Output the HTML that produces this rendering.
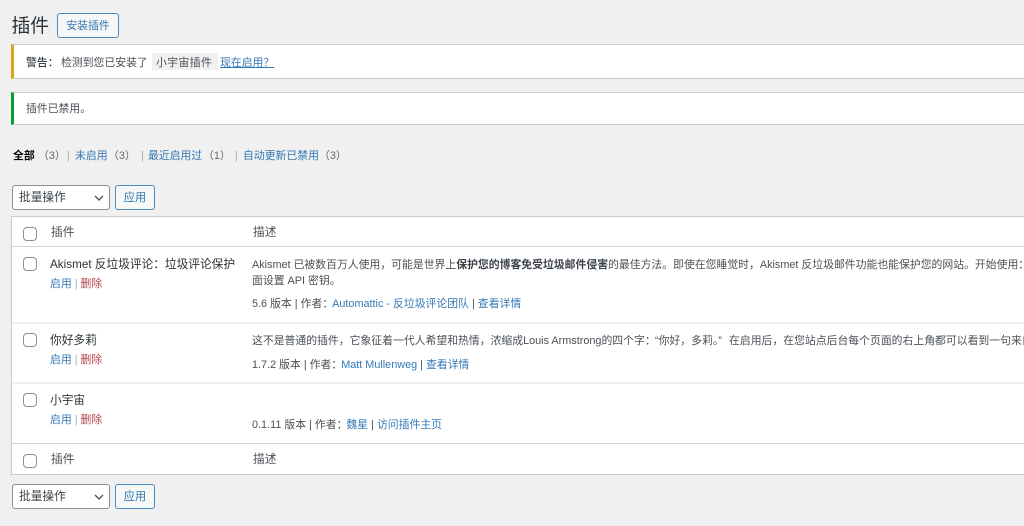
<!DOCTYPE html>
<html lang="zh-CN"><head><meta charset="utf-8"><title>插件</title>
<style>
html,body{margin:0;padding:0;width:1024px;height:526px;overflow:hidden;background:#f0f0f1}
body{position:relative;font-family:"Liberation Sans","Noto Sans CJK SC",sans-serif;font-size:10.85px;color:#4a5056}
#w{position:absolute;left:0;top:0;width:1024px;height:526px;overflow:hidden;filter:blur(.35px)}
.t{position:absolute;white-space:nowrap;line-height:16px;height:16px;margin-top:1px}
.n{font-size:11.7px}
a{color:#3278b4;text-decoration:none}
.del{color:#b8434a}
.box{position:absolute;box-sizing:border-box}
.notice{background:#fff;border:1px solid #c9cacc;border-right:0;border-left-width:3px}
.btn{box-sizing:border-box;position:absolute;border:1px solid #4a8bc0;border-radius:3px;background:#f6f7f7;color:#3278b4;text-align:center}
.sel{box-sizing:border-box;position:absolute;width:98px;height:25px;border:1px solid #8c8f94;border-radius:3px;background:#fff;color:#3c434a;line-height:24px;padding-left:6px;font-size:11.7px}
.cb{position:absolute;box-sizing:border-box;width:14px;height:14px;left:23px;border:1px solid #8c8f94;border-radius:4px;background:#fff}
.sep{position:absolute;left:12px;width:1012px;background:#f0f0f1}
</style></head><body><div id="w">

<div class="t" style="left:11.5px;top:12px;font-size:18.8px;line-height:26px;height:26px;color:#2c3338">插件</div>
<div class="btn" style="left:57px;top:13px;width:62px;height:25px;line-height:24px">安装插件</div>

<div class="box notice" style="left:11px;top:44px;width:1013px;height:35px;border-left-color:#dba617"></div>
<div class="t" style="left:26px;top:54px"><b style="font-weight:500;color:#3c434a">警告：</b></div>
<div class="t" style="left:61px;top:54px">检测到您已安装了</div>
<div class="box" style="left:152px;top:53px;width:66px;height:17px;background:#f0f0f1"></div>
<div class="t" style="left:156px;top:54px;letter-spacing:.4px">小宇宙插件</div>
<div class="t" style="left:220px;top:54px"><a href="#" style="text-decoration:underline">现在启用？</a></div>

<div class="box notice" style="left:11px;top:92px;width:1013px;height:33px;border-left-color:#00a32a"></div>
<div class="t" style="left:26px;top:100px">插件已禁用。</div>

<div class="t" style="left:13px;top:147px;color:#000;font-weight:700">全部</div>
<div class="t" style="left:38px;top:147px;color:#646970">（3）</div>
<div class="t" style="left:67px;top:147px;color:#a7aaad">|</div>
<div class="t" style="left:75px;top:147px"><a href="#">未启用</a></div>
<div class="t" style="left:108px;top:147px;color:#646970">（3）</div>
<div class="t" style="left:141px;top:147px;color:#a7aaad">|</div>
<div class="t" style="left:148px;top:147px"><a href="#">最近启用过</a></div>
<div class="t" style="left:203px;top:147px;color:#646970">（1）</div>
<div class="t" style="left:235px;top:147px;color:#a7aaad">|</div>
<div class="t" style="left:243px;top:147px"><a href="#">自动更新已禁用</a></div>
<div class="t" style="left:319px;top:147px;color:#646970">（3）</div>

<div class="sel" style="left:12px;top:185px">批量操作</div>
<svg class="box" style="left:94px;top:194px" width="10" height="8" viewBox="0 0 10 8"><path d="M1 2l4 4 4-4" fill="none" stroke="#50575e" stroke-width="1.4"/></svg>
<div class="btn" style="left:115px;top:185px;width:40px;height:25px;line-height:24px;font-size:11.2px">应用</div>

<div class="box" style="left:11px;top:216px;width:1013px;height:259px;background:#fff;border:1px solid #c9cacc;border-right:0"></div>
<div class="sep" style="top:246px;height:1px;background:#d5d6d8"></div>
<div class="sep" style="top:322px;height:2px"></div>
<div class="sep" style="top:382px;height:2px"></div>
<div class="sep" style="top:443px;height:1px;background:#d5d6d8"></div>

<div class="cb" style="top:227px"></div>
<div class="t n" style="left:51px;top:224px">插件</div>
<div class="t n" style="left:253px;top:224px">描述</div>

<div class="cb" style="top:257px"></div>
<div class="t n" style="left:50px;top:256px;color:#2c3338">Akismet 反垃圾评论：垃圾评论保护</div>
<div class="t" style="left:50px;top:275px"><a href="#">启用</a> <span style="color:#a7aaad">|</span> <a href="#" class="del">删除</a></div>
<div class="t" style="left:252px;top:256px">Akismet 已被数百万人使用，可能是世界上<b style="font-weight:700;color:#3c434a">保护您的博客免受垃圾邮件侵害</b>的最佳方法。即使在您睡觉时，Akismet 反垃圾邮件功能也能保护您的网站。开始使用：</div>
<div class="t" style="left:252px;top:272px">面设置 API 密钥。</div>
<div class="t" style="left:252px;top:295px">5.6 版本 | 作者：<a href="#" style="margin-left:-1px">Automattic - 反垃圾评论团队</a> | <a href="#">查看详情</a></div>

<div class="cb" style="top:333px"></div>
<div class="t n" style="left:50px;top:332px;color:#2c3338">你好多莉</div>
<div class="t" style="left:50px;top:351px"><a href="#">启用</a> <span style="color:#a7aaad">|</span> <a href="#" class="del">删除</a></div>
<div class="t" style="left:252px;top:332px">这不是普通的插件，它象征着一代人希望和热情，浓缩成Louis Armstrong的四个字：</div>
<div class="t" style="left:655px;top:332px">“你好，多莉。”</div>
<div class="t" style="left:729px;top:332px">在启用后，在您站点后台每个页面的右上角都可以看到一句来自</div>
<div class="t" style="left:252px;top:356px">1.7.2 版本 | 作者：<a href="#" style="margin-left:-1px">Matt Mullenweg</a> | <a href="#">查看详情</a></div>

<div class="cb" style="top:393px"></div>
<div class="t n" style="left:50px;top:392px;color:#2c3338">小宇宙</div>
<div class="t" style="left:50px;top:411px"><a href="#">启用</a> <span style="color:#a7aaad">|</span> <a href="#" class="del">删除</a></div>
<div class="t" style="left:252px;top:416px">0.1.11 版本 | 作者：<a href="#" style="margin-left:-1px">魏星</a> | <a href="#">访问插件主页</a></div>

<div class="cb" style="top:454px"></div>
<div class="t n" style="left:51px;top:451px">插件</div>
<div class="t n" style="left:253px;top:451px">描述</div>

<div class="sel" style="left:12px;top:484px">批量操作</div>
<svg class="box" style="left:94px;top:493px" width="10" height="8" viewBox="0 0 10 8"><path d="M1 2l4 4 4-4" fill="none" stroke="#50575e" stroke-width="1.4"/></svg>
<div class="btn" style="left:115px;top:484px;width:40px;height:25px;line-height:24px;font-size:11.2px">应用</div>

</div></body></html>
